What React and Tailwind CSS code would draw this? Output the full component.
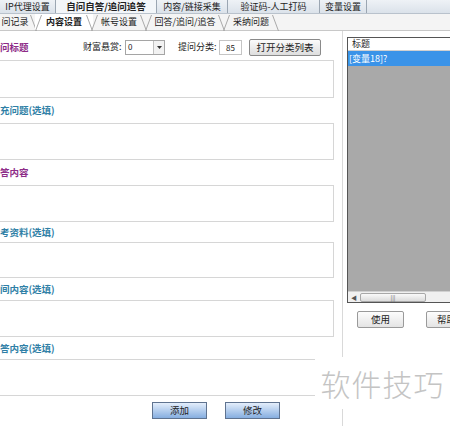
import React from 'react';

// 顶部主标签
const topTabs = [
  { label: 'IP代理设置', w: 'w-[56px]' },
  { label: '自问自答/追问追答', w: 'w-[101px]', active: true },
  { label: '内容/链接采集', w: 'w-[71px]' },
  { label: '验证码-人工打码', w: 'w-[92px]' },
  { label: '变量设置', w: 'w-[47px]' },
];

// 二级标签
const subTabs = [
  { label: '问记录', w: 'w-[30px]' },
  { label: '内容设置', w: 'w-[44px]', active: true },
  { label: '帐号设置', w: 'w-[42px]' },
  { label: '回答/追问/追答', w: 'w-[66px]' },
  { label: '采纳问题', w: 'w-[42px]' },
];

// 表单分段
const sections = [
  { label: '充问题(选填)', color: 'text-[#2f7fa6]', labelH: 'h-[25px]', boxH: 'h-[37px]' },
  { label: '答内容', color: 'text-[#8e2c88]', labelH: 'h-[25px]', boxH: 'h-[37px]' },
  { label: '考资料(选填)', color: 'text-[#2f7fa6]', labelH: 'h-[20px]', boxH: 'h-[36px]' },
  { label: '间内容(选填)', color: 'text-[#2f7fa6]', labelH: 'h-[22px]', boxH: 'h-[37px]' },
  { label: '答内容(选填)', color: 'text-[#2f7fa6]', labelH: 'h-[22px]', boxH: 'h-[37px]' },
];

const Slant = ({ dir }) => (
  <svg width="7" height="17" viewBox="0 0 7 17" className="shrink-0">
    {dir === 'left' ? (
      <line x1="0.5" y1="17" x2="6.5" y2="1" stroke="#a9a9a9" strokeWidth="1" />
    ) : (
      <line x1="0.5" y1="1" x2="6.5" y2="17" stroke="#a9a9a9" strokeWidth="1" />
    )}
  </svg>
);

const Box = ({ h }) => (
  <div className={`${h} w-[335px] -ml-px border border-[#d6d6d6] bg-white`} />
);

export default function App() {
  return (
    <div
      className="relative w-[450px] h-[426px] overflow-hidden bg-white text-[9px] text-[#222] whitespace-nowrap"
      style={{ fontFamily: '"Noto Sans CJK SC", "Noto Sans", sans-serif' }}
    >
      {/* 顶部标签栏 */}
      <div className="flex h-[14px] bg-gradient-to-b from-[#eef2f6] to-[#dbe2ea] border-b border-[#b9c2cc] leading-[13px]">
        {topTabs.map((t) => (
          <div
            key={t.label}
            className={`${t.w} shrink-0 text-center border-r border-[#9ba6b2] ${
              t.active ? 'font-bold bg-[#f3f6f9] text-[9.5px]' : 'text-[9px]'
            }`}
          >
            {t.label}
          </div>
        ))}
      </div>

      {/* 二级标签栏 */}
      <div className="flex h-[17px] bg-[#f4f4f4] border-b border-[#c8c8c8] leading-[16px]">
        {subTabs.map((t, i) => (
          <div
            key={t.label}
            className={`flex items-stretch shrink-0 ${i > 0 ? '-ml-[2px]' : ''} ${
              t.active ? 'bg-white font-bold' : ''
            }`}
          >
            {i > 0 && <Slant dir="left" />}
            <div className={`${t.w} text-center`}>{t.label}</div>
            <Slant dir="right" />
          </div>
        ))}
      </div>

      {/* 主体 */}
      <div className="flex h-[395px]">
        {/* 左侧表单 */}
        <div className="w-[343px] shrink-0 border-r border-[#d9d9d9] pt-[6px] overflow-hidden">
          <div className="flex items-center h-[20px]">
            <span className="w-[83px] font-bold text-[9.5px] text-[#8e2c88]">问标题</span>
            <span className="w-[42px]">财富悬赏:</span>
            <div className="flex items-center w-[40px] h-[15px] border border-[#a5a5a5] bg-white">
              <span className="flex-1 pl-[2px] text-[8px]">0</span>
              <div className="w-[11px] h-full border-l border-[#c0c0c0] bg-[#f2f2f2] flex items-center justify-center">
                <svg width="5" height="3" viewBox="0 0 5 3">
                  <path d="M0 0 L5 0 L2.5 3 Z" fill="#333" />
                </svg>
              </div>
            </div>
            <span className="ml-[13px] w-[41px]">提问分类:</span>
            <div className="w-[23px] h-[15px] border border-[#c5c5c5] bg-white text-[8px] text-center leading-[13px]">
              85
            </div>
            <button className="ml-[7px] w-[72px] h-[17px] border border-[#8a8a8a] rounded-[2px] bg-gradient-to-b from-[#fbfbfb] to-[#dedede] text-[9.5px] leading-[15px]">
              打开分类列表
            </button>
          </div>
          <div className="mt-[3px]">
            <Box h="h-[38px]" />
          </div>

          {sections.map((s) => (
            <div key={s.label}>
              <div className={`${s.labelH} flex items-center font-bold text-[9.5px] ${s.color}`}>{s.label}</div>
              <Box h={s.boxH} />
            </div>
          ))}

          <div className="flex mt-[6px] pl-[152px] gap-[18px]">
            <button className="w-[55px] h-[17px] border border-[#5f7390] bg-gradient-to-b from-[#e4eefb] to-[#86aee0] text-[9.5px] leading-[15px]">
              添加
            </button>
            <button className="w-[55px] h-[17px] border border-[#5f7390] bg-gradient-to-b from-[#e4eefb] to-[#86aee0] text-[9.5px] leading-[15px]">
              修改
            </button>
          </div>
        </div>

        {/* 右侧列表 */}
        <div className="flex-1 pl-[4px] pt-[6px] overflow-hidden">
          <div className="w-[120px] h-[266px] border border-[#555] flex flex-col bg-[#a9a9a9]">
            <div className="h-[13px] bg-white border-b border-[#d0d0d0] pl-[4px] leading-[12px]">标题</div>
            <div className="h-[15px] bg-[#3a93e8] text-white pl-[1px] leading-[15px] text-[9px]">[变量18]?</div>
            <div className="flex-1" />
            <div className="h-[11px] bg-[#f0f0f0] border-t border-[#d0d0d0] flex items-center">
              <span className="w-[12px] text-[6px] text-center text-[#555]">◀</span>
              <div className="w-[66px] h-[9px] border border-[#a8a8a8] rounded-[2px] bg-gradient-to-b from-[#fafafa] to-[#dcdcdc] text-[6px] leading-[7px] text-center text-[#666]">
                |||
              </div>
            </div>
          </div>
          <div className="flex mt-[8px] pl-[10px] gap-[22px]">
            <button className="shrink-0 w-[47px] h-[17px] border border-[#9a9a9a] rounded-[2px] bg-gradient-to-b from-[#fdfdfd] to-[#e4e4e4] text-[9.5px] leading-[15px]">
              使用
            </button>
            <button className="shrink-0 w-[47px] h-[17px] border border-[#9a9a9a] rounded-[2px] bg-gradient-to-b from-[#fdfdfd] to-[#e4e4e4] text-[9.5px] leading-[15px] text-left pl-[10px]">
              帮助
            </button>
          </div>
        </div>
      </div>

      {/* 水印 */}
      <div className="absolute left-[315px] top-[357px] w-[135px] h-[52px] bg-white flex items-center justify-center">
        <span className="text-[30px] tracking-[1px] text-[#c4c4c4] font-light">软件技巧</span>
      </div>
    </div>
  );
}
